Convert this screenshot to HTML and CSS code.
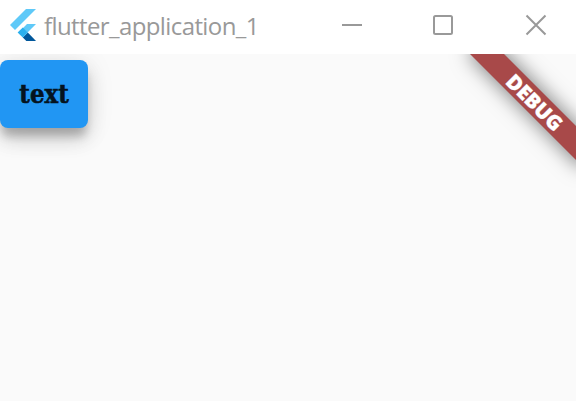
FILE: index.html
```html
<!DOCTYPE html>
<html lang="en">
<head>
<meta charset="utf-8">
<title>flutter_application_1</title>
<link rel="stylesheet" href="styles.css">
</head>
<body>
<header class="titlebar">
  <svg class="logo" width="26" height="32" viewBox="0 0 26 32">
    <path fill="#5fc9f8" d="M16 0h10L5 21l-5-5zM17 15h9l-8.5 8.5-5-4z"/>
    <path fill="#01579b" d="M12.8 28.5l5-5L26 32h-9.7z"/>
    <path fill="#2bb0ee" d="M7.6 23.5l5.2-5 5 5-5 5.1z"/>
  </svg>
  <h1 class="title">flutter_application_1</h1>
  <nav class="controls">
    <svg width="22" height="22" viewBox="0 0 22 22"><path d="M1 11h20"/></svg>
    <svg width="22" height="22" viewBox="0 0 22 22"><rect x="2" y="2" width="18" height="18" rx="1.5"/></svg>
    <svg width="22" height="22" viewBox="0 0 22 22"><path d="M1.5 1.5l19 19M20.5 1.5l-19 19"/></svg>
  </nav>
</header>
<main class="client">
  <button class="button"><span class="label">text</span></button>
  <div class="banner"><span class="banner-text">DEBUG</span></div>
</main>
</body>
</html>
```
FILE: styles.css
```css
* { box-sizing: border-box; }
body {
  margin: 0;
  height: 402px;
  display: flex;
  flex-direction: column;
  background: #fff;
  overflow: hidden;
}
.titlebar {
  height: 54px;
  flex: none;
  display: flex;
  align-items: center;
  padding: 0 29px 4px 10px;
}
.logo { flex: none; }
.title {
  margin: 2px 0 0 8px;
  font: 400 24px/32px "Open Sans", "Noto Sans", sans-serif;
  letter-spacing: -0.6px;
  color: #999;
}
.controls {
  margin-left: auto;
  display: flex;
}
.controls svg {
  fill: none;
  stroke: #999;
  stroke-width: 2;
}
.controls svg:nth-child(2) { margin: 0 71px 0 69px; }
.client {
  position: relative;
  height: 347px;
  padding-top: 6px;
  background: #fafafa;
  overflow: hidden;
}
.button {
  display: flex;
  align-items: center;
  justify-content: center;
  width: 88px;
  height: 68px;
  padding: 0;
  border: 0;
  border-radius: 8px;
  background: #2196f3;
  box-shadow: 0 10px 8px -2px rgba(0,0,0,.2), 0 12px 20px rgba(0,0,0,.14), 0 4px 28px rgba(0,0,0,.1);
}
.label {
  font: 700 26px/32px "DejaVu Serif", serif;
  color: #04131f;
  -webkit-text-stroke: .6px #04131f;
  transform: scaleX(.88);
}
.banner {
  position: absolute;
  left: 455px;
  top: 36px;
  width: 160px;
  height: 24px;
  display: flex;
  align-items: center;
  justify-content: center;
  transform: rotate(45deg);
  background: #a84949;
  box-shadow: 0 0 20px 1px rgba(0,0,0,.5);
}
.banner-text {
  font: 800 20.4px/24px "Open Sans", sans-serif;
  letter-spacing: -0.1px;
  color: #fff;
  -webkit-text-stroke: .3px #fff;
}
```
